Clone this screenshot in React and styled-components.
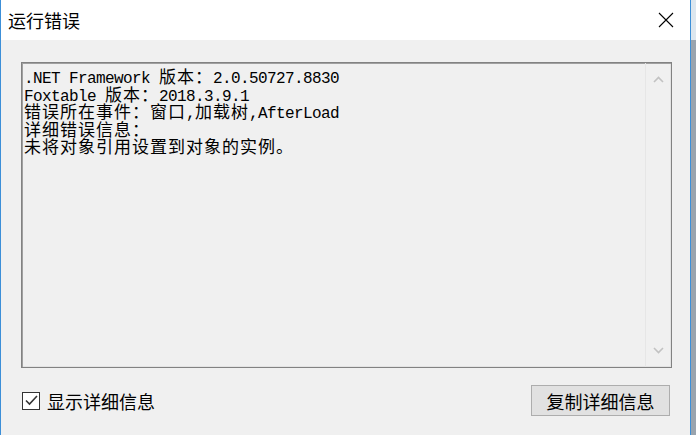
import React from 'react';
import styled, { createGlobalStyle } from 'styled-components';

const Global = createGlobalStyle`
  html, body { margin: 0; padding: 0; }
  body { width: 696px; height: 435px; overflow: hidden; background: #a9b3bd; }
`;

const Screen = styled.div`
  display: flex;
  width: 696px;
  height: 435px;
`;

const Window = styled.div`
  flex-shrink: 0;
  width: 689px;
  height: 435px;
  border-left: 1px solid #3c8fd8;
  border-right: 1px solid #3c8fd8;
  display: flex;
  flex-direction: column;
  background: #f0f0f0;
`;

const Backdrop = styled.div`
  flex: 1;
  background: linear-gradient(#dce6ee 0 40px, #9aa4ae 40px);
`;

const TitleBar = styled.div`
  height: 40px;
  flex-shrink: 0;
  background: #fff;
  display: flex;
  align-items: center;
  justify-content: space-between;
  padding: 0 16px 0 7px;
  font-family: "Noto Sans CJK SC", sans-serif;
  font-size: 18px;
  color: #000;
`;

const Title = styled.span`
  line-height: 1;
  margin-top: -1px;
`;

const Body = styled.div`
  flex: 1;
  display: flex;
  flex-direction: column;
  padding: 22px 18px 0 20px;
`;

const TextBox = styled.div`
  box-sizing: border-box;
  width: 651px;
  height: 306px;
  display: flex;
  border: 1px solid #828282;
  box-shadow: inset 1px 1px 0 #a0a0a0, inset -1px -1px 0 #e3e3e3;
  background: #f0f0f0;
`;

const TextArea = styled.div`
  flex: 1;
  padding: 4px 2px 0 2px;
`;

const Line = styled.div`
  height: 17.5px;
  white-space: pre;
  font-family: "Liberation Mono", monospace;
  font-size: 16px;
  letter-spacing: -0.6px;
  line-height: 17.5px;
  color: #000;
`;

const Cjk = styled.span`
  font-family: "Noto Sans CJK SC", sans-serif;
  font-size: 17px;
  letter-spacing: 1px;
  line-height: 17px;
`;

const ScrollBar = styled.div`
  width: 25px;
  border-left: 1px solid #e6e6e6;
  display: flex;
  flex-direction: column;
  justify-content: space-between;
  padding: 1px 0 1px 0;
`;

const ScrollButton = styled.div`
  height: 31px;
  display: flex;
  align-items: center;
  justify-content: center;
`;

const Footer = styled.div`
  margin-top: 17px;
  padding: 0 2px 0 1px;
  display: flex;
  align-items: center;
  justify-content: space-between;
  height: 31px;
`;

const CheckLabel = styled.label`
  display: flex;
  align-items: center;
  gap: 7px;
  font-family: "Noto Sans CJK SC", sans-serif;
  font-size: 18px;
  color: #000;
`;

const Box = styled.span`
  box-sizing: border-box;
  width: 18px;
  height: 18px;
  border: 1.5px solid #333;
  background: #fff;
  display: flex;
  align-items: center;
  justify-content: center;
`;

const Button = styled.button`
  box-sizing: border-box;
  width: 139px;
  height: 31px;
  border: 1px solid #adadad;
  background: #e1e1e1;
  font-family: "Noto Sans CJK SC", sans-serif;
  font-size: 18px;
  color: #000;
  padding: 0;
  display: flex;
  align-items: center;
  justify-content: center;
`;

const lines = [
  '.NET Framework 版本：2.0.50727.8830',
  'Foxtable 版本：2018.3.9.1',
  '错误所在事件：窗口,加载树,AfterLoad',
  '详细错误信息：',
  '未将对象引用设置到对象的实例。',
];

const cjkRe = /([\u3000-\u9fff\uff00-\uffef]+)/;

function renderLine(text) {
  return text.split(cjkRe).map((part, i) =>
    cjkRe.test(part) ? <Cjk key={i}>{part}</Cjk> : <React.Fragment key={i}>{part}</React.Fragment>
  );
}

export default function App() {
  return (
    <>
      <Global />
      <Screen>
        <Window>
          <TitleBar>
            <Title>运行错误</Title>
            <svg width="16" height="16" viewBox="0 0 16 16">
              <path d="M1 1 L15 15 M15 1 L1 15" stroke="#000" strokeWidth="1.1" fill="none" />
            </svg>
          </TitleBar>
          <Body>
            <TextBox>
              <TextArea>
                {lines.map((l, i) => (
                  <Line key={i}>{renderLine(l)}</Line>
                ))}
              </TextArea>
              <ScrollBar>
                <ScrollButton>
                  <svg width="11" height="7" viewBox="0 0 11 7">
                    <path d="M1 6 L5.5 1.5 L10 6" stroke="#c2c2c2" strokeWidth="1.6" fill="none" />
                  </svg>
                </ScrollButton>
                <ScrollButton>
                  <svg width="11" height="7" viewBox="0 0 11 7">
                    <path d="M1 1 L5.5 5.5 L10 1" stroke="#c2c2c2" strokeWidth="1.6" fill="none" />
                  </svg>
                </ScrollButton>
              </ScrollBar>
            </TextBox>
            <Footer>
              <CheckLabel>
                <Box>
                  <svg width="15" height="15" viewBox="0 0 15 15">
                    <path d="M2 7.5 L5.5 11 L13 3" stroke="#333" strokeWidth="1.6" fill="none" />
                  </svg>
                </Box>
                显示详细信息
              </CheckLabel>
              <Button>复制详细信息</Button>
            </Footer>
          </Body>
        </Window>
        <Backdrop />
      </Screen>
    </>
  );
}
